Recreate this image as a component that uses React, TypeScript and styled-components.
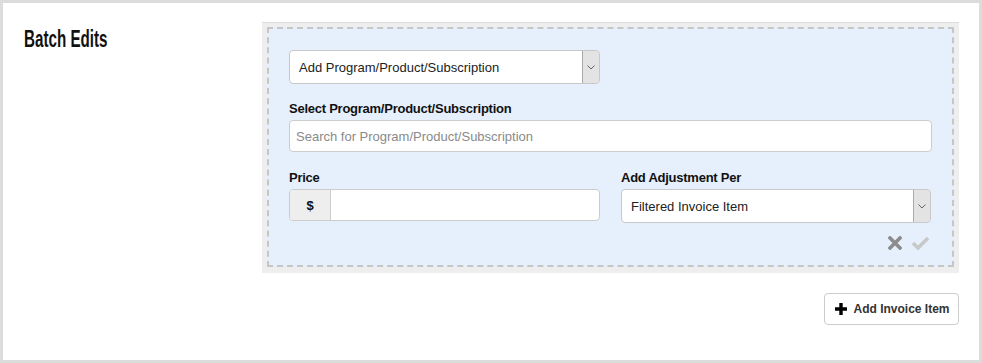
import React from "react";
import styled, { createGlobalStyle } from "styled-components";

const Global = createGlobalStyle`
  html, body { margin: 0; padding: 0; background: #fff; }
  body { font-family: "Liberation Sans", Arial, sans-serif; color: #222; }
  * { box-sizing: border-box; }
`;

const Frame = styled.div`
  width: 982px;
  height: 363px;
  border: 3px solid #dcdcdc;
  background: #fff;
  display: grid;
  grid-template-columns: 259px 697px;
  align-items: start;
  padding-top: 19px;
`;

const Heading = styled.h2`
  margin: 0;
  padding: 3px 0 0 21px;
  font-family: "Liberation Sans", Arial, sans-serif;
  font-weight: bold;
  font-size: 23px;
  line-height: 28px;
  color: #111;
  transform: scaleX(0.66);
  transform-origin: 21px 0;
  white-space: nowrap;
`;

const Column = styled.div`
  display: flex;
  flex-direction: column;
  align-items: flex-end;
`;

const Well = styled.div`
  width: 100%;
  background: #eeeeee;
  border-top: 1px solid #dddddd;
  padding: 4px 5px 6px 5px;
`;

const Dashed = styled.div`
  border: 2px dashed #c6c6c6;
  background: #e6f0fc;
  padding: 21px 20px 15px 20px;
  display: flex;
  flex-direction: column;
`;

const Half = styled.div`
  width: 311px;
`;

const SelectBox = styled.div`
  height: 34px;
  background: #fff;
  border: 1px solid #c8c8c8;
  border-radius: 4px;
  display: flex;
  align-items: stretch;
  overflow: hidden;
`;

const SelectText = styled.div`
  flex: 1;
  padding-left: 9px;
  display: flex;
  align-items: center;
  font-size: 13px;
  color: #222;
`;

const ArrowBox = styled.div`
  width: 18px;
  background: #e3e3e3;
  border: 1px solid #aaaaaa;
  border-radius: 0 3px 3px 0;
  margin: -1px -1px -1px 0;
  display: flex;
  align-items: center;
  justify-content: center;
`;

const Label = styled.div<{ $top?: number }>`
  margin-top: ${(p) => p.$top ?? 0}px;
  margin-bottom: 4px;
  font-size: 13px;
  line-height: 15px;
  font-weight: bold;
  letter-spacing: -0.25px;
  color: #111;
`;

const TextInput = styled.div`
  height: 32px;
  background: #fff;
  border: 1px solid #cccccc;
  border-radius: 4px;
  padding-left: 6px;
  display: flex;
  align-items: center;
  font-size: 13px;
  color: #8a8a8a;
`;

const Row = styled.div`
  display: grid;
  grid-template-columns: 311px 310px;
  column-gap: 21px;
  margin-top: 18px;
`;

const InputGroup = styled.div`
  height: 32px;
  display: flex;
  border: 1px solid #cccccc;
  border-radius: 4px;
  overflow: hidden;
  background: #fff;
`;

const Addon = styled.div`
  width: 41px;
  background: #eeeeee;
  border-right: 1px solid #cccccc;
  display: flex;
  align-items: center;
  justify-content: center;
  font-weight: bold;
  font-size: 13px;
  color: #111;
`;

const Actions = styled.div`
  display: flex;
  justify-content: flex-end;
  gap: 9px;
  margin-top: 13px;
  padding-right: 2px;
`;

const Button = styled.button`
  margin-top: 20px;
  height: 32px;
  width: 135px;
  background: #fff;
  border: 1px solid #cccccc;
  border-radius: 4px;
  display: flex;
  align-items: center;
  justify-content: center;
  gap: 6px;
  font-family: "Liberation Sans", Arial, sans-serif;
  font-size: 12px;
  font-weight: bold;
  color: #333;
  padding: 0 0 0 2px;
`;

const Chevron = () => (
  <svg width="8" height="5" viewBox="0 0 8 5">
    <path d="M0.5 0.5 L4 4 L7.5 0.5" fill="none" stroke="#666" strokeWidth="1" />
  </svg>
);

const Cross = () => (
  <svg width="14" height="14" viewBox="0 0 14 14">
    <path d="M2 2 L12 12 M12 2 L2 12" stroke="#8c8c8c" strokeWidth="3.6" strokeLinecap="square" />
  </svg>
);

const Check = () => (
  <svg width="19" height="14" viewBox="0 0 19 14">
    <path d="M2 7 L7 12 L17 2" fill="none" stroke="#c8c8c8" strokeWidth="3.6" />
  </svg>
);

const Plus = () => (
  <svg width="12" height="12" viewBox="0 0 12 12">
    <path d="M6 0 V12 M0 6 H12" stroke="#000" strokeWidth="3.4" />
  </svg>
);

export default function App() {
  return (
    <>
      <Global />
      <Frame>
        <Heading>Batch Edits</Heading>
        <Column>
          <Well>
            <Dashed>
              <Half>
                <SelectBox>
                  <SelectText>Add Program/Product/Subscription</SelectText>
                  <ArrowBox>
                    <Chevron />
                  </ArrowBox>
                </SelectBox>
              </Half>
              <Label $top={17}>Select Program/Product/Subscription</Label>
              <TextInput>Search for Program/Product/Subscription</TextInput>
              <Row>
                <div>
                  <Label>Price</Label>
                  <InputGroup>
                    <Addon>$</Addon>
                  </InputGroup>
                </div>
                <div>
                  <Label>Add Adjustment Per</Label>
                  <SelectBox>
                    <SelectText>Filtered Invoice Item</SelectText>
                    <ArrowBox>
                      <Chevron />
                    </ArrowBox>
                  </SelectBox>
                </div>
              </Row>
              <Actions>
                <Cross />
                <Check />
              </Actions>
            </Dashed>
          </Well>
          <Button>
            <Plus />
            Add Invoice Item
          </Button>
        </Column>
      </Frame>
    </>
  );
}
